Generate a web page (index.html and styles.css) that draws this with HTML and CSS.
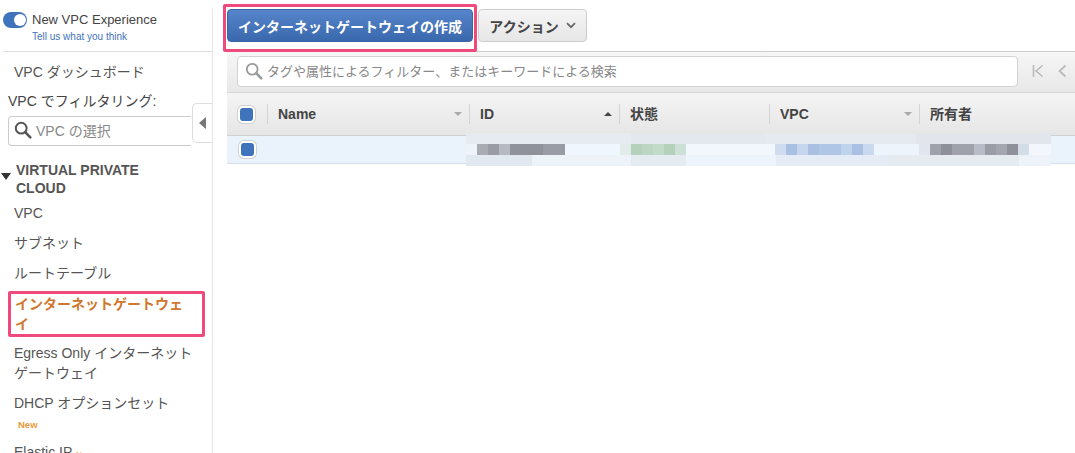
FILE: index.html
```html
<!DOCTYPE html>
<html lang="ja">
<head>
<meta charset="utf-8">
<title>インターネットゲートウェイ</title>
<link rel="stylesheet" href="styles.css">
</head>
<body>
<div class="page">
  <aside class="sidebar">
    <div class="experience">
      <span class="toggle"><span class="knob"></span></span>
      <div class="experience-text">
        <div class="experience-title">New VPC Experience</div>
        <a class="experience-link">Tell us what you think</a>
      </div>
    </div>
    <div class="nav-link dash">VPC ダッシュボード</div>
    <div class="filter-label">VPC でフィルタリング:</div>
    <div class="vpc-select">
      <svg class="lens" width="18" height="18" viewBox="0 0 18 18"><circle cx="7.2" cy="7.2" r="5.4" fill="none" stroke="#555" stroke-width="2"/><path d="M11.2 11.2L16.3 16.3" stroke="#555" stroke-width="2.6" stroke-linecap="round"/></svg>
      <span>VPC の選択</span>
    </div>
    <div class="collapse-tab"><span class="collapse-arrow"></span></div>
    <div class="section"><span class="section-arrow"></span><span>VIRTUAL PRIVATE CLOUD</span></div>
    <nav class="nav">
      <div class="nav-link">VPC</div>
      <div class="nav-link">サブネット</div>
      <div class="nav-link">ルートテーブル</div>
      <div class="nav-link active">インターネットゲートウェイ</div>
      <div class="nav-link">Egress Only インターネットゲートウェイ</div>
      <div class="nav-link">DHCP オプションセット<div class="new">New</div></div>
      <div class="nav-link">Elastic IP <span class="tiny">New</span></div>
    </nav>
  </aside>
  <main class="main">
    <div class="toolbar">
      <div class="highlight"><button class="btn primary">インターネットゲートウェイの作成</button></div>
      <button class="btn action">アクション<svg class="chev" width="10" height="7" viewBox="0 0 10 7"><path d="M1 1.2L5 5.2L9 1.2" fill="none" stroke="#666" stroke-width="1.7"/></svg></button>
    </div>
    <div class="filterbar">
      <div class="search">
        <svg class="lens" width="18" height="18" viewBox="0 0 18 18"><circle cx="7.2" cy="7.2" r="5.4" fill="none" stroke="#9a9a9a" stroke-width="1.8"/><path d="M11.2 11.2L16.3 16.3" stroke="#9a9a9a" stroke-width="2.6" stroke-linecap="round"/></svg>
        <span class="search-text">タグや属性によるフィルター、またはキーワードによる検索</span>
      </div>
      <div class="pager">
        <svg width="12" height="14" viewBox="0 0 12 14"><path d="M1.5 1V13M10.5 1.5L4 7L10.5 12.5" fill="none" stroke="#bbb" stroke-width="1.6"/></svg>
        <svg width="9" height="14" viewBox="0 0 9 14"><path d="M7.5 1.5L1.5 7L7.5 12.5" fill="none" stroke="#bbb" stroke-width="1.8"/></svg>
      </div>
    </div>
    <div class="grid head">
      <div class="cell check"><span class="box"></span></div>
      <div class="cell th"><span>Name</span><i class="sort down"></i></div>
      <div class="cell th"><span>ID</span><i class="sort up"></i></div>
      <div class="cell th"><span class="cjk">状態</span></div>
      <div class="cell th"><span>VPC</span><i class="sort down"></i></div>
      <div class="cell th"><span class="cjk">所有者</span></div>
    </div>
    <div class="grid row">
      <div class="cell check row-check"><span class="box"></span></div>
      <div class="cell"></div><div class="cell"></div><div class="cell"></div><div class="cell"></div><div class="cell"></div>
      <div class="mosaic"><div class="band pale"></div><div class="band core"></div><div class="band pale2"></div></div>
    </div>
  </main>
</div>
</body>
</html>
```
FILE: styles.css
```css
* { box-sizing: border-box; }
html, body { margin: 0; padding: 0; }
body {
  background: #fff;
  font-family: "Liberation Sans", "Noto Sans CJK JP", sans-serif;
  color: #444;
  overflow: hidden;
}
.page { display: flex; width: 1075px; height: 453px; overflow: hidden; }

/* Sidebar */
.sidebar {
  position: relative;
  flex: 0 0 213px;
  height: 453px;
  margin-top: 9px;
  border-right: 1px solid #e6e6e6;
  overflow: hidden;
  padding-left: 3px;
}
.experience {
  display: flex;
  gap: 5px;
  height: 43px;
  padding-top: 3px;
  border-bottom: 1px solid #ddd;
}
.toggle {
  position: relative;
  flex: 0 0 24px;
  height: 16px;
  border-radius: 8px;
  background: #3f74bd;
}
.knob {
  position: absolute;
  right: 1px;
  top: 2px;
  width: 12px;
  height: 12px;
  border-radius: 50%;
  background: #fff;
}
.experience-title { font-size: 13px; line-height: 15px; color: #444; }
.experience-link { display: block; margin-top: 4px; font-size: 10px; line-height: 12px; color: #3f74bd; }
.nav-link { font-size: 14px; line-height: 20px; color: #555; }
.dash { margin: 10px 0 0 11px; }
.filter-label { margin: 9px 0 0 5px; font-size: 14px; line-height: 20px; color: #444; }
.vpc-select {
  display: flex;
  align-items: center;
  gap: 4px;
  margin: 5px 0 0 5px;
  width: 183px;
  height: 30px;
  padding: 0 0 2px 5px;
  border: 1px solid #ccc;
  border-right: 0;
  border-radius: 4px 0 0 4px;
  font-size: 14px;
  color: #888;
}
.collapse-tab {
  position: absolute;
  left: 192px;
  top: 94px;
  width: 20px;
  height: 40px;
  display: flex;
  align-items: center;
  justify-content: center;
  background: #fff;
  border: 1px solid #ddd;
  border-right: 0;
  border-radius: 5px 0 0 5px;
}
.collapse-arrow {
  border-style: solid;
  border-width: 6px 7px 6px 0;
  border-color: transparent #777 transparent transparent;
}
.section {
  position: relative;
  margin-top: 15px;
  padding: 0 50px 0 13px;
  font-size: 14px;
  line-height: 18px;
  font-weight: 700;
  color: #555;
}
.section-arrow {
  position: absolute;
  left: -2px;
  top: 12px;
  border-style: solid;
  border-width: 7px 5px 0 5px;
  border-color: #333 transparent transparent transparent;
}
.nav { margin-top: 6px; padding-right: 6px; }
.nav .nav-link { padding: 0 10px 10px 11px; }
.nav .active {
  margin: -2px 0 6px 5px;
  padding: 0 15px 0 4px;
  border: 3px solid #ef4a7b;
  border-radius: 2px;
  width: 197px;
  font-weight: 700;
  color: #d0772f;
  line-height: 20px;
  height: 46px;
}
.new { margin: 6px 0 0 4px; font-size: 9.5px; font-weight: 700; line-height: 12px; color: #eb9a37; }
.tiny { font-size: 8px; color: #eb9a37; }
.nav .nav-link:nth-child(6) { padding-bottom: 11px; }

/* Main */
.main { flex: 1; padding-left: 14px; min-width: 0; }
.toolbar {
  position: relative;
  display: flex;
  align-items: flex-start;
  height: 52px;
  padding-top: 9px;
  border-bottom: 1px solid #ccc;
}
.highlight {
  position: absolute;
  left: -4px;
  top: 4px;
  width: 254px;
  height: 48px;
  border: 3px solid #ef4a7b;
  border-radius: 2px;
  padding: 2px 0 0 1px;
  background: #fff;
}
.btn {
  height: 33px;
  border-radius: 4px;
  font-family: inherit;
  font-size: 14px;
  font-weight: 700;
  padding: 0;
}
.primary {
  width: 246px;
  color: #fff;
  background: linear-gradient(#5685cb, #3a68ad);
  border: 1px solid #3a66a8;
}
.action {
  display: flex;
  align-items: center;
  justify-content: center;
  gap: 7px;
  margin-left: 251px;
  width: 109px;
  color: #444;
  background: linear-gradient(#f5f5f5, #e6e6e6);
  border: 1px solid #ccc;
}
.filterbar {
  display: flex;
  align-items: center;
  height: 41px;
  padding: 0 0 2px 10px;
  background: linear-gradient(#f6f6f6, #e8e8e8);
  border-bottom: 1px solid #d5d5d5;
}
.search {
  display: flex;
  align-items: center;
  gap: 4px;
  width: 781px;
  height: 31px;
  padding-left: 7px;
  background: #fff;
  border: 1px solid #d2d2d2;
  border-radius: 4px;
  font-size: 13px;
  color: #888;
}
.search-text { padding-bottom: 2px; }
.lens { flex: none; }
.pager { display: flex; align-items: center; gap: 14px; margin-left: 14px; }
.grid {
  position: relative;
  display: grid;
  grid-template-columns: 40px 202px 150px 150px 150px 1fr;
}
.head {
  height: 43px;
  background: linear-gradient(#f4f4f4, #e6e6e6);
  border-bottom: 1px solid #d0d0d0;
  font-size: 14px;
  font-weight: 700;
  color: #444;
}
.cjk { padding-bottom: 2px; }
.cell { display: flex; align-items: center; }
.check { padding-left: 11px; }
.row-check { padding-left: 12px; }
.box {
  width: 17px;
  height: 17px;
  border-radius: 5px;
  background: #3f74bd;
  border: 2px solid #fff;
  box-shadow: 0 0 0 1px #d0d0d0;
}
.th { position: relative; justify-content: space-between; padding: 0 7px 0 11px; }
.th::before {
  content: "";
  position: absolute;
  left: 0;
  top: 11px;
  height: 20px;
  border-left: 1px solid #d4d4d4;
}
.sort { border-style: solid; border-width: 0; }
.sort.down { border-width: 4px 4px 0; border-color: #aaa transparent transparent; }
.sort.up { border-width: 0 4px 4px; border-color: transparent transparent #444; }
.row {
  height: 28px;
  background: #eaf2fb;
  border-bottom: 1px solid #d8dfe8;
}
.mosaic {
  position: absolute;
  left: 239px;
  top: -3px;
  width: 585px;
  height: 33px;
}
.band { height: 11px; }
.pale {
  background: linear-gradient(90deg, #e6ebf1 0 165px, #e3e8ee 165px 300px, #e5e9f0 300px 450px, #e2e6ec 450px 585px);
}
.pale2 {
  background: linear-gradient(90deg, #e2e8f0 0 66px, #eef3fa 66px 165px, #e4ecf1 165px 220px, #eef4fb 220px 310px, #e5ecf6 310px 420px, #e6eaf1 420px 553px, #eef3fa 553px 585px);
}
.core {
  background: linear-gradient(90deg,
    #eef3f9 0 11px, #a8abb2 11px 22px, #999ca4 22px 33px, #b5bac2 33px 44px, #8f929a 44px 77px, #999ca4 77px 99px,
    #f0f6fd 99px 154px, #e0ebea 154px 165px,
    #b5d0bb 165px 176px, #bcd6c3 176px 187px, #c2dbc9 187px 198px, #b5d0bb 198px 209px, #cde0d8 209px 220px,
    #f2f7fd 220px 309px,
    #cfdcf0 309px 320px, #a9c0e2 320px 331px, #c5d6ee 331px 342px, #a9c0e2 342px 353px, #b0c6e6 353px 375px,
    #c0d3ec 375px 386px, #a9c0e2 386px 397px, #c9daf0 397px 408px,
    #eef4fc 408px 453px, #e0e5ee 453px 464px,
    #a0a2ab 464px 475px, #8e9099 475px 486px, #a0a2ab 486px 508px, #b8bcc6 508px 519px, #9b9da6 519px 530px,
    #a4a6af 530px 541px, #8f919a 541px 552px, #d4dce7 552px 563px, #f3f7fd 563px 585px);
}
```
